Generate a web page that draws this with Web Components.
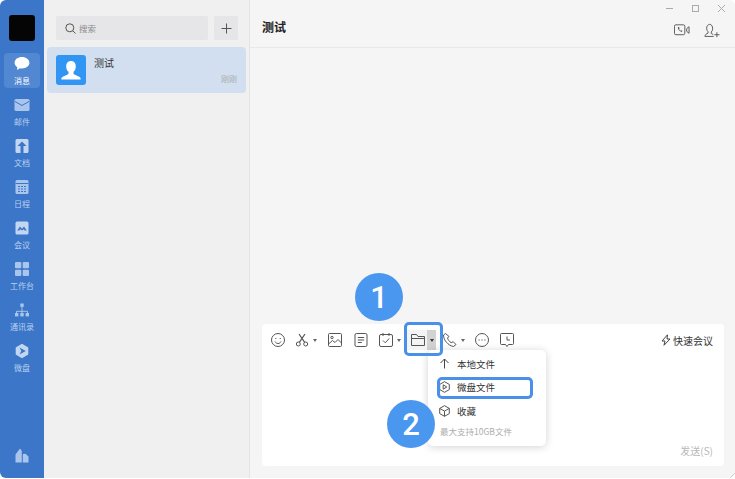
<!DOCTYPE html>
<html lang="zh">
<head>
<meta charset="utf-8">
<title>测试</title>
<style>
  html, body { margin: 0; height: 100%; background: #fff; }
  body { font-family: "Noto Sans CJK SC", "Liberation Sans", sans-serif; overflow: hidden; }
</style>
</head>
<body>
<app-window>
  <side-rail slot="rail">
    <rail-item label="消息" active><svg viewBox="0 0 16 16"><path d="M8 1C3.800 1 .6 3.400.6 6.700c0 1.900 1.100 3.500 2.800 4.600l-.5 2.700 3.100-1.800c.6.100 1.300.2 2 .2 4.200 0 7.400-2.500 7.400-5.700S12.200 1 8 1z" fill="#fff"/></svg></rail-item>
    <rail-item label="邮件"><svg viewBox="0 0 16 16"><rect x="0.500" y="2" width="15" height="12" rx="1.500" fill="#a9c5ec"/><path d="M1 4.500l7 4 7-4" fill="none" stroke="#3b76c8" stroke-width="1"/></svg></rail-item>
    <rail-item label="文档"><svg viewBox="0 0 16 16"><rect x="1.500" y="1" width="13" height="14" rx="1.500" fill="#c3d6f1"/><path d="M8 3.500L3.500 8h3v7h3V8h3z" fill="#3b76c8"/></svg></rail-item>
    <rail-item label="日程"><svg viewBox="0 0 16 16"><rect x="1.500" y="1" width="13" height="14" rx="1.500" fill="#a9c5ec"/><path d="M1.500 4.500h13" stroke="#3b76c8"/><path d="M4 7.500h8M4 10h8M4 12.500h8" stroke="#3b76c8" stroke-dasharray="2 1"/></svg></rail-item>
    <rail-item label="会议"><svg viewBox="0 0 16 16"><rect x="1.500" y="1.500" width="13" height="13" rx="1.500" fill="#c3d6f1"/><path d="M3.200 10.500l2.800-4 2 2.300 2-2.300 2.800 4-2.200 0-.8-1.300-1.800 1.300-1.800-1.300-.8 1.300z" fill="#3b76c8"/></svg></rail-item>
    <rail-item label="工作台"><svg viewBox="0 0 16 16" fill="#a9c5ec"><rect x="1" y="1" width="6.300" height="6.300" rx="1"/><rect x="8.700" y="1" width="6.300" height="6.300" rx="1"/><rect x="1" y="8.700" width="6.300" height="6.300" rx="1"/><rect x="8.700" y="8.700" width="6.300" height="6.300" rx="1"/></svg></rail-item>
    <rail-item label="通讯录"><svg viewBox="0 0 16 16"><path d="M8 5v4M2.500 12V9.300h11V12M8 9v3" fill="none" stroke="#c3d6f1" stroke-width=".8"/><g fill="#a9c5ec"><rect x="6.300" y="1.500" width="3.400" height="3.400"/><rect x="1" y="11" width="3.400" height="3.400"/><rect x="6.300" y="11" width="3.400" height="3.400"/><rect x="11.600" y="11" width="3.400" height="3.400"/></g></svg></rail-item>
    <rail-item label="微盘"><svg viewBox="0 0 16 16"><path d="M8 .8l6.300 3.600v7.200L8 15.200l-6.300-3.600V4.400z" fill="#c3d6f1"/><path d="M5.500 4.600L11.800 8l-6.300 3.400 1.800-3.400z" fill="#3b76c8"/></svg></rail-item>
  </side-rail>

  <chat-list slot="list"></chat-list>
  <chat-panel slot="main"></chat-panel>
</app-window>

<script>
// helper: attach the open shadow root with its markup
function mount(el, html) {
  el.attachShadow({ mode: 'open' }).innerHTML = html;
}

class AppWindow extends HTMLElement {
  constructor() {
    super();
    mount(this, `
    <style>
      :host { display: flex; width: 735px; height: 478px; border-radius: 6px; overflow: hidden; background: #f5f5f5; }
      .list { flex: 0 0 206px; }
      .main { flex: 1; min-width: 0; }
    </style>
    <slot name="rail"></slot>
    <div class="list"><slot name="list"></slot></div>
    <div class="main"><slot name="main"></slot></div>`);
  }
}

class SideRail extends HTMLElement {
  constructor() {
    super();
    mount(this, `
    <style>
      :host { display: flex; flex-direction: column; align-items: center; flex: 0 0 44px; width: 44px; background: #3b76c8; padding-top: 15px; box-sizing: border-box; }
      .me { width: 26px; height: 26px; background: #050505; border-radius: 3px; margin-bottom: 12px; flex: none; }
      .items { display: flex; flex-direction: column; gap: 6px; }
      .foot { margin-top: auto; margin-bottom: 15px; width: 14px; height: 15px; }
      svg { display: block; width: 100%; height: 100%; }
    </style>
    <div class="me"></div>
    <div class="items"><slot></slot></div>
    <div class="foot"><svg viewBox="0 0 14 15"><path d="M.5 14.500V6.500L5 .5 6.800 3v11.500zM7.800 14.500V6l2.700-.3 3 2.800v6z" fill="#a9c5ec"/></svg></div>`);
  }
}

class RailItem extends HTMLElement {
  constructor() {
    super();
    mount(this, `
    <style>
      :host { display: flex; flex-direction: column; align-items: center; width: 36px; height: 35px; border-radius: 4px; padding-top: 3px; box-sizing: border-box; color: #bad0ef; }
      :host([active]) { background: #5287d1; color: #fff; }
      .ic { width: 16px; height: 16px; }
      ::slotted(svg) { display: block; width: 16px; height: 16px; }
      .t { font-size: 8px; line-height: 11px; margin-top: 3px; white-space: nowrap; }
    </style>
    <div class="ic"><slot></slot></div>
    <div class="t"></div>`);
  }
  connectedCallback() {
    this.shadowRoot.querySelector('.t').textContent = this.getAttribute('label');
  }
}

class ChatList extends HTMLElement {
  constructor() {
    super();
    mount(this, `
    <style>
      :host { display: block; height: 100%; background: #f0f0f0; border-right: 1px solid #e3e3e3; box-sizing: border-box; }
      .top { display: flex; gap: 6px; padding: 16px 11px 7px 12px; }
      .search { flex: 1; height: 24px; background: #e6e6e8; border-radius: 2px; display: flex; align-items: center; padding-left: 9px; gap: 3px; font-size: 8.500px; color: #8c8c8c; }
      .add { width: 24px; height: 24px; background: #e6e6e8; border-radius: 2px; display: flex; align-items: center; justify-content: center; }
      .row { display: flex; margin: 0 3px; height: 46px; background: #d2dff0; border-radius: 4px; padding: 8px 9px; box-sizing: border-box; }
      .av { width: 30px; height: 30px; background: #3196f3; border-radius: 3px; flex: none; }
      .body { flex: 1; margin-left: 8px; position: relative; }
      .name { font-size: 10px; line-height: 14px; color: #333; margin-top: 1px; }
      .time { position: absolute; right: 0; bottom: 1px; font-size: 8px; line-height: 11px; color: #adadad; }
      svg { display: block; }
    </style>
    <div class="top">
      <div class="search">
        <svg width="11" height="11" viewBox="0 0 11 11" fill="none" stroke="#555" stroke-width="1"><circle cx="4.800" cy="4.800" r="4"/><path d="M7.800 7.800L10.500 10.500"/></svg>
        <span>搜索</span>
      </div>
      <div class="add"><svg width="11" height="11" viewBox="0 0 11 11" stroke="#555" stroke-width="1"><path d="M5.500 .5v10M.5 5.500h10"/></svg></div>
    </div>
    <div class="row">
      <div class="av"><svg width="30" height="30" viewBox="0 0 30 30"><path d="M15 6c-3 0-4.800 2.200-4.800 5.400 0 2.300 1 4.300 2.300 5.400v1.700c0 1-3.500 2-6.200 3.600-.7.500-1 1.300-1 2.400h19.400c0-1.100-.3-1.900-1-2.400-2.700-1.600-6.200-2.600-6.200-3.600v-1.700c1.300-1.100 2.300-3.100 2.300-5.400C19.800 8.200 18 6 15 6z" fill="#fff"/></svg></div>
      <div class="body">
        <div class="name">测试</div>
        <div class="time">刚刚</div>
      </div>
    </div>`);
  }
}

class ChatPanel extends HTMLElement {
  constructor() {
    super();
    mount(this, `
    <style>
      :host { display: flex; flex-direction: column; height: 100%; background: #f5f5f5; position: relative; }
      header { flex: 0 0 48px; box-sizing: border-box; border-bottom: 1px solid #e8e8e8; display: flex; align-items: center; padding: 7px 15px 0 12px; position: relative; }
      h1 { font-size: 12px; font-weight: 700; color: #222; margin: 0 0 1px; flex: 1; line-height: 16px; }
      .acts { display: flex; gap: 14px; align-items: center; margin-top: 6px; }
      .ctl { position: absolute; top: 4px; right: 9px; display: flex; gap: 17px; }
      .grow { flex: 1; }
      .foot { padding: 0 11px 12px 12px; }
      .grip { position: absolute; right: 0; bottom: 0; }
      svg { display: block; }
    </style>
    <header>
      <h1>测试</h1>
      <div class="ctl">
        <svg width="9" height="9" viewBox="0 0 9 9" stroke="#aaa"><path d="M1 4.500h7"/></svg>
        <svg width="9" height="9" viewBox="0 0 9 9" fill="none" stroke="#aaa"><rect x="1.500" y="1.500" width="6" height="6"/></svg>
        <svg width="9" height="9" viewBox="0 0 9 9" stroke="#aaa"><path d="M1 1l7 7M8 1L1 8"/></svg>
      </div>
      <div class="acts">
        <svg width="16" height="12" viewBox="0 0 17 12" fill="none" stroke="#555"><rect x=".5" y=".5" width="11" height="10.500" rx="1.500"/><path d="M4 3.200c0 2 1.800 4.600 4.500 5l.3-1.300-1.400-.7-.6.6c-.7-.4-1.200-1-1.500-1.800l.7-.6-.7-1.500z" fill="#555" stroke="none"/><path d="M13.500 4.500l2.500-2v7l-2.500-2z"/></svg>
        <svg width="16" height="15" viewBox="0 0 17 15" fill="none" stroke="#555"><path d="M.8 13.800h9.500M1 13.500c.2-1.700 1.500-2.500 3.300-3.200v-1.500c-1-.8-1.500-2-1.500-3.600C2.800 3 4 1 6 1s3.200 2 3.200 4.500c0 1.600-.5 2.800-1.500 3.600v1.500c.8.300 1.500.7 2.100 1.200"/><path d="M11 12h5.500M13.700 9.300v5.300"/></svg>
      </div>
    </header>
    <div class="grow"></div>
    <div class="foot"><chat-composer></chat-composer></div>
    <svg class="grip" width="5" height="5" viewBox="0 0 5 5" stroke="#bbb" stroke-width=".7"><path d="M0 5l5-5M2.500 5L5 2.500"/></svg>`);
  }
}

class ChatComposer extends HTMLElement {
  constructor() {
    super();
    mount(this, `
    <style>
      :host { display: block; position: relative; height: 142px; background: #fff; border-radius: 4px; }
      .bar { display: flex; align-items: center; height: 32px; padding: 0 11px 0 8px; }
      .tool { flex: none; width: 16px; height: 16px; margin-right: 8px; }
      .tool.c { margin-right: 3px; }
      .caret { flex: none; width: 0; height: 0; margin-right: 10px; border-left: 2.500px solid transparent; border-right: 2.500px solid transparent; border-top: 3px solid #666; }
      .folder { flex: none; display: flex; background: #f4f4f4; padding: 2px 1px 2px 3px; margin-left: -3px; }
      .box { flex: none; width: 9px; height: 20px; background: #d2d2d2; margin: 0 6px 0 0; display: flex; align-items: center; justify-content: center; }
      .box i { width: 0; height: 0; border-left: 2.500px solid transparent; border-right: 2.500px solid transparent; border-top: 3px solid #333; }
      .quick { margin-left: auto; display: flex; align-items: center; gap: 2px; font-size: 10px; color: #333; white-space: nowrap; }
      .send { position: absolute; right: 11px; bottom: 8px; font-size: 10px; line-height: 14px; color: #b8b8b8; }
      svg { display: block; }
    </style>
    <div class="bar">
      <svg class="tool" viewBox="0 0 16 16" fill="none" stroke="#555"><circle cx="8" cy="8" r="6.500"/><path d="M5 9.500c.7 1.300 1.700 2 3 2s2.300-.7 3-2"/><path d="M5.800 6v1M10.200 6v1"/></svg>
      <svg class="tool c" viewBox="0 0 16 16" fill="none" stroke="#555"><circle cx="4.300" cy="12" r="2"/><circle cx="11.700" cy="12" r="2"/><path d="M5.300 10.300L11 2M10.700 10.300L5 2" stroke-width="1.200"/></svg>
      <i class="caret"></i>
      <svg class="tool" style="margin-right:10px" viewBox="0 0 16 16" fill="none" stroke="#555"><rect x="1.500" y="1.500" width="13" height="13" rx="1"/><circle cx="5" cy="5.500" r="1.200"/><path d="M1.500 12l4-3.500 2.500 2 3-3 3.500 3.500"/></svg>
      <svg class="tool" style="margin-right:9px" viewBox="0 0 16 16" fill="none" stroke="#555"><rect x="2" y="1.500" width="12" height="13" rx="1.500"/><path d="M4.800 5.500h6.400M4.800 8h6.400M4.800 10.500h4"/></svg>
      <svg class="tool" style="margin-right:3px" viewBox="0 0 16 16" fill="none" stroke="#555"><rect x="1.500" y="2.500" width="13" height="12" rx="1.500"/><path d="M5 1v3M11 1v3"/><path d="M5 8.500l2.300 2.300L11.200 6.500"/></svg>
      <i class="caret" style="margin-right:9px"></i>
      <div class="folder"><svg class="tool" style="margin-right:0" viewBox="0 0 16 16" fill="none" stroke="#555"><path d="M1.500 13.500v-11h5l1.500 2h6.500v9z"/><path d="M1.500 6.500h13"/></svg></div>
      <div class="box"><i></i></div>
      <svg class="tool c" viewBox="0 0 16 16" fill="none" stroke="#555"><path d="M3.500 1.500L1.500 3c0 5 4.500 10.500 10 11.500l2.500-2-2.800-2.800-2 1c-1.700-1-3-2.700-3.700-4.700l1.500-1.500z" /></svg>
      <i class="caret" style="margin-right:9px"></i>
      <svg class="tool" style="margin-right:9px" viewBox="0 0 16 16" fill="none" stroke="#555"><circle cx="8" cy="8" r="6.500"/><path d="M4.500 8h1.200M7.400 8h1.200M10.300 8h1.200" stroke-width="1.200"/></svg>
      <svg class="tool" viewBox="0 0 16 16" fill="none" stroke="#555"><path d="M3 1.500h10.500a1 1 0 0 1 1 1v9a1 1 0 0 1-1 1H9.500L8 14.500l-1.500-2H2.500a1 1 0 0 1-1-1v-9a1 1 0 0 1 1-1z"/><path d="M8 4.500V8h3"/></svg>
      <div class="quick">
        <svg width="10" height="12" viewBox="0 0 10 12" fill="none" stroke="#444"><path d="M6.500 .8L1 7h3l-1 4.300L9 5H6z"/></svg>
        <span>快速会议</span>
      </div>
    </div>
    <div class="send">发送(S)</div>
    <file-menu></file-menu>
    <hl-box style="left:142px;top:-2px;width:39px;height:34px"></hl-box>
    <step-badge n="1" style="left:93px;top:-51px"></step-badge>
    <step-badge n="2" style="left:125px;top:76px"></step-badge>`);
  }
}

class FileMenu extends HTMLElement {
  constructor() {
    super();
    mount(this, `
    <style>
      :host { display: block; position: absolute; left: 166px; top: 26px; width: 118px; height: 96px; box-sizing: border-box; background: #fff; border-radius: 5px; box-shadow: 0 1px 8px rgba(0,0,0,.18); padding-top: 2px; }
      .it { display: flex; align-items: center; height: 23.500px; padding-left: 11px; gap: 7px; font-size: 9.500px; color: #333; }
      .hint { font-size: 8.500px; line-height: 14px; color: #adadad; padding-left: 12px; margin-top: 1px; white-space: nowrap; }
      hl-box { left: 9px; top: 27px; width: 96px; height: 22px; }
      svg { display: block; flex: none; }
    </style>
    <div class="it"><svg width="11" height="11" viewBox="0 0 11 11" fill="none" stroke="#444"><path d="M5.500 10.500V1M1.500 5l4-4 4 4"/></svg><span>本地文件</span></div>
    <div class="it"><svg width="11" height="12" viewBox="0 0 11 12" fill="none" stroke="#555"><path d="M5.500 .7l4.800 2.700v5.200l-4.800 2.700L.7 8.600V3.400z"/><path d="M4.200 3.800L7.800 6 4.200 8.200z"/></svg><span>微盘文件</span></div>
    <div class="it"><svg width="11" height="12" viewBox="0 0 11 12" fill="none" stroke="#555"><path d="M5.500 .7l4.800 2.700v5.200l-4.800 2.700L.7 8.600V3.400z"/><path d="M.7 3.400l4.800 2.700 4.800-2.700M5.500 6.100v5.200"/></svg><span>收藏</span></div>
    <div class="hint">最大支持10GB文件</div>
    <hl-box></hl-box>`);
  }
}

class HlBox extends HTMLElement {
  constructor() {
    super();
    mount(this, `<style>:host { display: block; position: absolute; box-sizing: border-box; border: 3px solid #4a90e8; border-radius: 5px; pointer-events: none; }</style>`);
  }
}

class StepBadge extends HTMLElement {
  constructor() {
    super();
    mount(this, `
    <style>
      :host { position: absolute; width: 48px; height: 48px; border-radius: 50%; background: #4a97ef; color: #fff; display: flex; align-items: center; justify-content: center; font-family: Roboto, "Liberation Sans", sans-serif; font-weight: 500; font-size: 31px; line-height: 1; }
    </style><span></span>`);
  }
  connectedCallback() {
    this.shadowRoot.querySelector('span').textContent = this.getAttribute('n');
  }
}

customElements.define('app-window', AppWindow);
customElements.define('side-rail', SideRail);
customElements.define('rail-item', RailItem);
customElements.define('chat-list', ChatList);
customElements.define('chat-panel', ChatPanel);
customElements.define('chat-composer', ChatComposer);
customElements.define('file-menu', FileMenu);
customElements.define('hl-box', HlBox);
customElements.define('step-badge', StepBadge);
</script>
</body>
</html>
